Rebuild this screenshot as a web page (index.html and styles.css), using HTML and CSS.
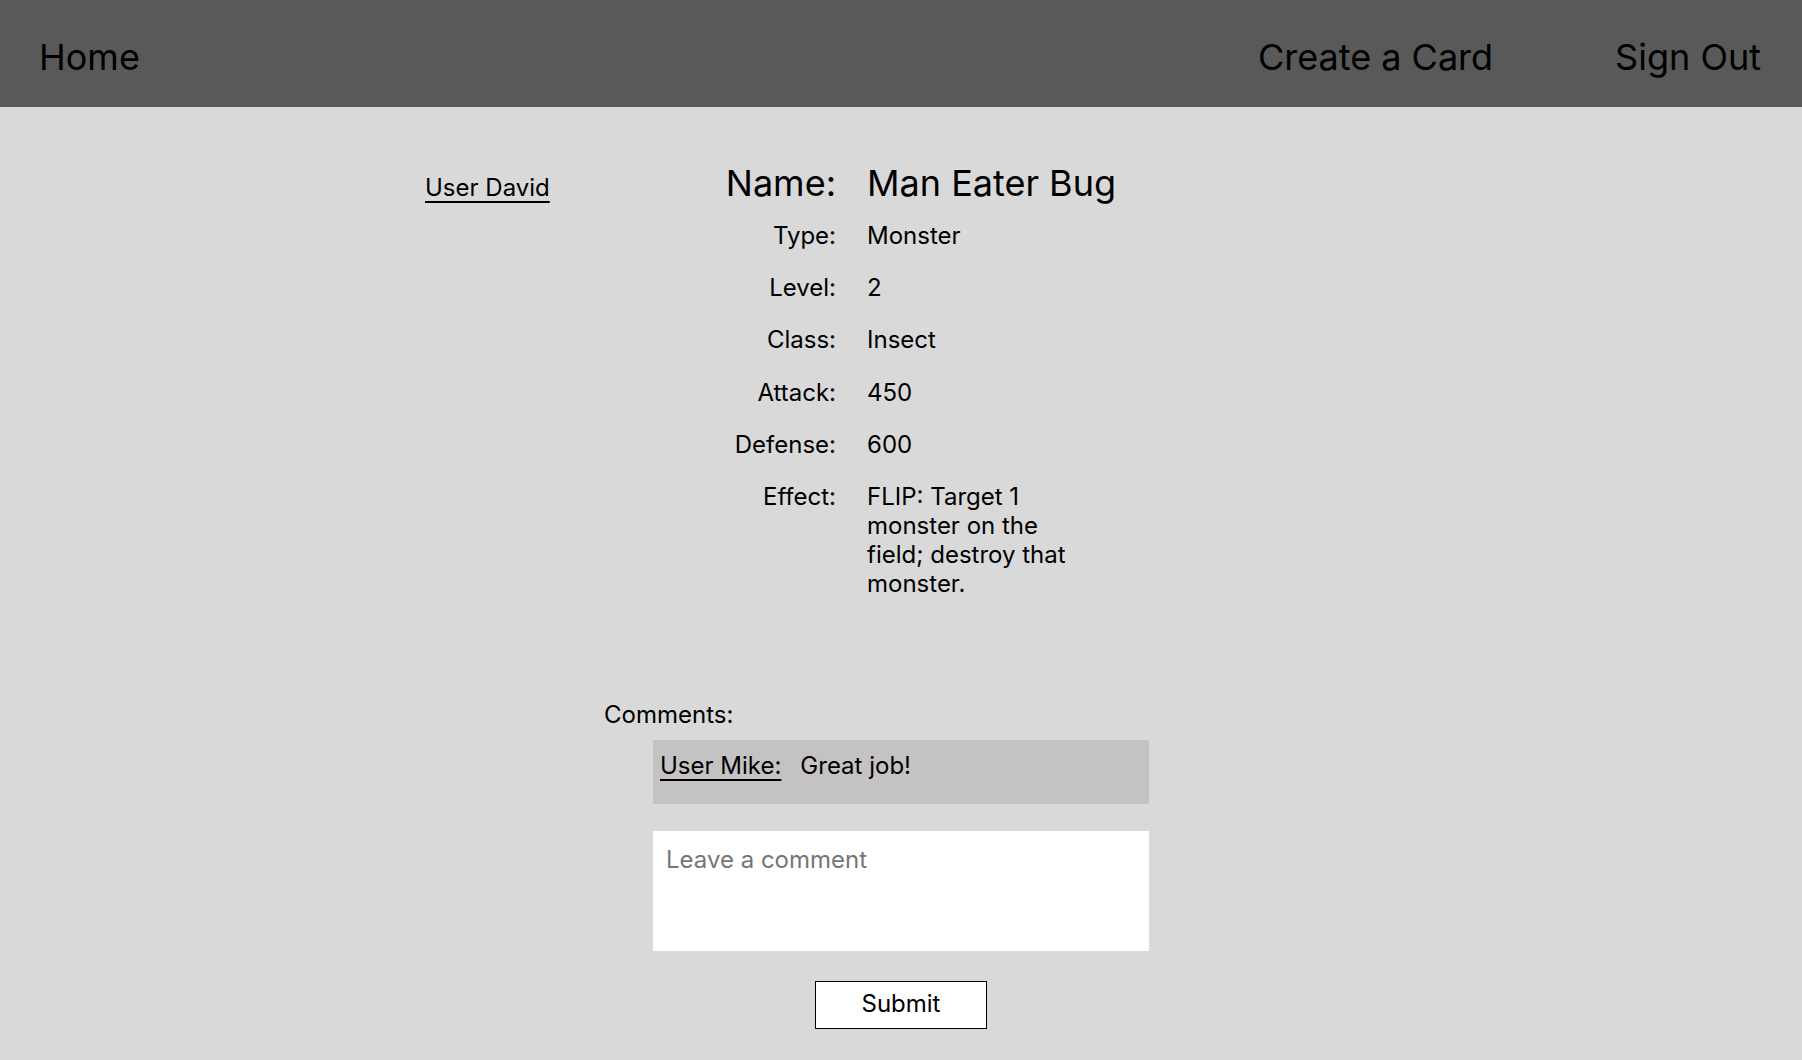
FILE: index.html
```html
<!DOCTYPE html>
<html lang="en">
<head>
<meta charset="utf-8">
<title>Man Eater Bug</title>
<link rel="stylesheet" href="styles.css">
</head>
<body>
<header class="topbar">
  <a class="nav-link" href="#">Home</a>
  <nav class="nav-right">
    <a class="nav-link" href="#">Create a Card</a>
    <a class="nav-link" href="#">Sign Out</a>
  </nav>
</header>
<main class="page">
  <section class="card-area">
    <div class="owner"><a class="user-link" href="#">User David</a></div>
    <div class="card">
      <div class="name-row">
        <span class="label">Name:</span>
        <span class="value">Man Eater Bug</span>
      </div>
      <div class="fields">
        <span class="label">Type:</span><span class="value">Monster</span>
        <span class="label">Level:</span><span class="value">2</span>
        <span class="label">Class:</span><span class="value">Insect</span>
        <span class="label">Attack:</span><span class="value">450</span>
        <span class="label">Defense:</span><span class="value">600</span>
        <span class="label">Effect:</span><span class="value">FLIP: Target 1 monster on the field; destroy that monster.</span>
      </div>
    </div>
  </section>
  <section class="comments">
    <div class="comments-title">Comments:</div>
    <div class="comment">
      <a class="user-link" href="#">User Mike:</a>
      <span class="comment-text">Great job!</span>
    </div>
    <textarea class="comment-input" placeholder="Leave a comment"></textarea>
    <button class="submit" type="button">Submit</button>
  </section>
</main>
</body>
</html>
```
FILE: styles.css
```css
* { box-sizing: border-box; }
html, body { margin: 0; padding: 0; }
body {
  background: #d9d9d9;
  font-family: "Inter", "Noto Sans", sans-serif;
  color: #000;
  width: 1802px;
  height: 1060px;
  overflow: hidden;
}
.topbar {
  height: 107px;
  background: #595959;
  display: flex;
  align-items: center;
  justify-content: space-between;
  padding: 9px 41px 0 39px;
}
.nav-link {
  font-size: 36px;
  line-height: 1.2;
  color: #000;
  text-decoration: none;
}
.nav-right {
  display: flex;
  gap: 122px;
}
.page {
  display: flex;
  flex-direction: column;
}
.card-area {
  display: flex;
  padding: 55px 0 0 425px;
}
.owner {
  width: 300px;
  padding-top: 11.5px;
  font-size: 24px;
  line-height: 1.2;
}
.user-link {
  color: #000;
  text-decoration: underline;
  text-decoration-thickness: 1.5px;
  text-underline-offset: 5px;
  font-size: 24px;
  line-height: 1.2;
}
.card {
  display: flex;
  flex-direction: column;
}
.name-row {
  display: grid;
  grid-template-columns: 111px auto;
  column-gap: 31px;
  font-size: 36px;
  line-height: 1.2;
  margin-bottom: 15.5px;
}
.fields {
  display: grid;
  grid-template-columns: 111px 215px;
  column-gap: 31px;
  row-gap: 23.3px;
  font-size: 24px;
  line-height: normal;
}
.label { text-align: right; }
.comments {
  display: flex;
  flex-direction: column;
  align-items: center;
  padding-top: 103px;
}
.comments-title {
  align-self: flex-start;
  padding-left: 604px;
  font-size: 24px;
  line-height: 1.2;
}
.comment {
  margin-top: 10px;
  width: 496px;
  height: 64px;
  background: #c4c2c3;
  padding: 12px 7px;
  display: flex;
  gap: 19px;
  font-size: 24px;
  line-height: 1.2;
}
.comment-input {
  margin-top: 27px;
  width: 496px;
  height: 120px;
  border: none;
  outline: none;
  resize: none;
  background: #fff;
  padding: 15px 13px 13px;
  font-family: "Inter", "Noto Sans", sans-serif;
  font-size: 24px;
  line-height: 1.2;
  color: #000;
  display: block;
}
.comment-input::placeholder { color: #767676; }
.submit {
  margin-top: 30px;
  width: 172px;
  height: 48px;
  background: #fff;
  border: 1px solid #000;
  border-radius: 0;
  font-family: "Inter", "Noto Sans", sans-serif;
  font-size: 24px;
  line-height: 1.2;
  color: #000;
  padding: 0 0 1px;
}
```
